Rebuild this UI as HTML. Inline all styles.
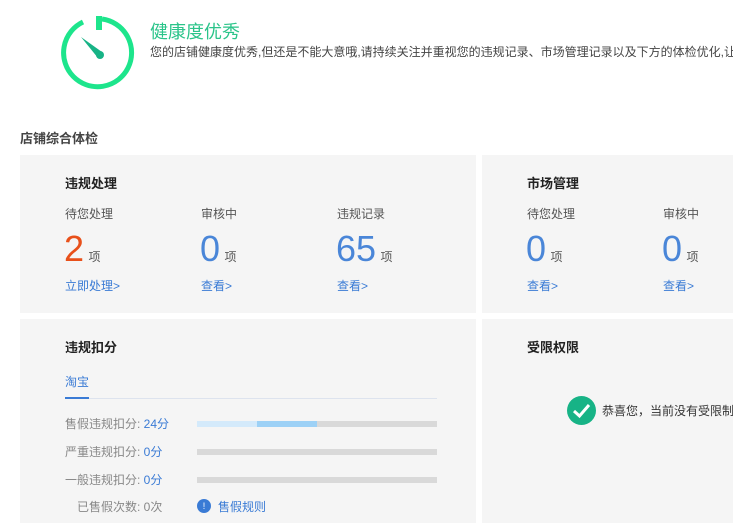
<!DOCTYPE html>
<html><head><meta charset="utf-8"><style>
body{margin:0;width:733px;height:528px;overflow:hidden;background:#fff;font-family:"Liberation Sans","Noto Sans CJK SC",sans-serif;position:relative}
.a{position:absolute;white-space:nowrap}
.p{position:absolute;background:#f5f5f5}
.t{font-size:13px;font-weight:bold;color:#222}
.l{font-size:12px;color:#555}
.n{font-size:36px;color:#4a86d8;line-height:36px}
.u{font-size:12px;color:#555}
.k{font-size:12px;color:#3a7bd5}
.g{font-size:12px;color:#888}
.bar{position:absolute;height:6px;background:#d9d9d9;left:197px;width:240px}
</style></head><body>
<svg class="a" style="left:55px;top:12px" width="84" height="84" viewBox="0 0 84 84">
<path d="M28 10 A34 34 0 1 0 47 7" fill="none" stroke="#1de58c" stroke-width="5"/>
<rect x="41" y="4" width="6" height="14" fill="#1de58c"/>
<path d="M26 25 L47 40 L43 46 Z" fill="#17b386"/>
<circle cx="45" cy="43" r="4" fill="#17b386"/>
</svg>
<div class="a" style="left:150px;top:18px;font-size:18px;color:#2bc48a">健康度优秀</div>
<div class="a" style="left:150px;top:43px;font-size:12px;color:#444">您的店铺健康度优秀,但还是不能大意哦,请持续关注并重视您的违规记录、市场管理记录以及下方的体检优化,让</div>
<div class="a t" style="left:20px;top:128px;color:#444">店铺综合体检</div>

<div class="p" style="left:20px;top:155px;width:456px;height:158px"></div>
<div class="p" style="left:482px;top:155px;width:251px;height:158px"></div>
<div class="p" style="left:20px;top:319px;width:456px;height:204px"></div>
<div class="p" style="left:482px;top:319px;width:251px;height:204px"></div>

<div class="a t" style="left:65px;top:173px">违规处理</div>
<div class="a l" style="left:65px;top:205px">待您处理</div>
<div class="a l" style="left:201px;top:205px">审核中</div>
<div class="a l" style="left:337px;top:205px">违规记录</div>
<div class="a" style="left:64px;top:231px"><span class="n" style="color:#e8501a">2</span> <span class="u">项</span></div>
<div class="a" style="left:200px;top:231px"><span class="n">0</span> <span class="u">项</span></div>
<div class="a" style="left:336px;top:231px"><span class="n">65</span> <span class="u">项</span></div>
<div class="a k" style="left:65px;top:277px">立即处理&gt;</div>
<div class="a k" style="left:201px;top:277px">查看&gt;</div>
<div class="a k" style="left:337px;top:277px">查看&gt;</div>

<div class="a t" style="left:527px;top:173px">市场管理</div>
<div class="a l" style="left:527px;top:205px">待您处理</div>
<div class="a l" style="left:663px;top:205px">审核中</div>
<div class="a" style="left:526px;top:231px"><span class="n">0</span> <span class="u">项</span></div>
<div class="a" style="left:662px;top:231px"><span class="n">0</span> <span class="u">项</span></div>
<div class="a k" style="left:527px;top:277px">查看&gt;</div>
<div class="a k" style="left:663px;top:277px">查看&gt;</div>

<div class="a t" style="left:65px;top:337px">违规扣分</div>
<div class="a k" style="left:65px;top:373px">淘宝</div>
<div class="a" style="left:65px;top:398px;width:372px;height:1px;background:#dde3ee"></div>
<div class="a" style="left:65px;top:397px;width:24px;height:2px;background:#3a7bd5"></div>
<div class="a g" style="left:65px;top:415px">售假违规扣分: <span style="color:#3a7bd5">24分</span></div>
<div class="a g" style="left:65px;top:443px">严重违规扣分: <span style="color:#3a7bd5">0分</span></div>
<div class="a g" style="left:65px;top:471px">一般违规扣分: <span style="color:#3a7bd5">0分</span></div>
<div class="a g" style="left:77px;top:498px">已售假次数: 0次</div>
<div class="bar" style="top:421px"></div>
<div class="a" style="left:197px;top:421px;width:60px;height:6px;background:#d4eafb"></div>
<div class="a" style="left:257px;top:421px;width:60px;height:6px;background:#9dd1f6"></div>
<div class="bar" style="top:449px"></div>
<div class="bar" style="top:477px"></div>
<div class="a" style="left:197px;top:499px;width:14px;height:14px;border-radius:50%;background:#3a7bd5;color:#fff;font-size:9px;text-align:center;line-height:14px">!</div>
<div class="a k" style="left:218px;top:498px">售假规则</div>

<div class="a t" style="left:527px;top:337px">受限权限</div>
<svg class="a" style="left:567px;top:396px" width="29" height="29" viewBox="0 0 29 29"><circle cx="14.5" cy="14.5" r="14.5" fill="#17b386"/><path d="M7 15 L12.5 20 L22 9" fill="none" stroke="#fff" stroke-width="3"/></svg>
<div class="a" style="left:602px;top:402px;font-size:12px;color:#333">恭喜您，当前没有受限制</div>
</body></html>
